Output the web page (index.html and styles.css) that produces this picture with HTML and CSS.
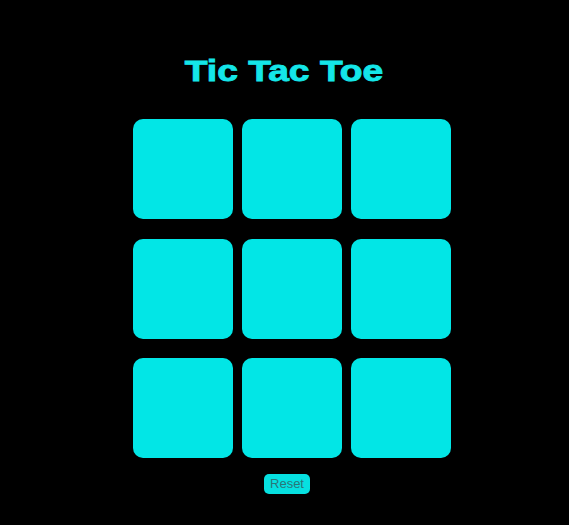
FILE: index.html
```html
<!DOCTYPE html>
<html>
<head>
<meta charset="utf-8">
<link rel="stylesheet" href="styles.css">
</head>
<body>
<div class="app">
  <h1 class="title"><span class="title-text">Tic Tac Toe</span></h1>
  <div class="board">
    <div class="cell"></div><div class="cell"></div><div class="cell"></div>
    <div class="cell"></div><div class="cell"></div><div class="cell"></div>
    <div class="cell"></div><div class="cell"></div><div class="cell"></div>
  </div>
  <button class="reset">Reset</button>
</div>
</body>
</html>
```
FILE: styles.css
```css
html, body {
  margin: 0;
  padding: 0;
  background: #000;
  height: 100%;
}
body {
  font-family: "Liberation Sans", Arial, sans-serif;
}
.app {
  display: flex;
  flex-direction: column;
  align-items: center;
  padding-top: 54px;
}
.title {
  margin: 0;
  font-size: 30px;
  line-height: 34px;
  font-weight: bold;
  color: #14e6e8;
  -webkit-text-stroke: 0.9px #14e6e8;
}
.title-text {
  display: inline-block;
  transform: scaleX(1.24);
}
.board {
  margin-top: 31px;
  margin-left: 15px;
  display: grid;
  grid-template-columns: repeat(3, 100px);
  grid-auto-rows: 100px;
  column-gap: 9px;
  row-gap: 19.5px;
}
.cell {
  background: #02e6e6;
  border-radius: 10px;
}
.reset {
  margin-top: 16px;
  margin-left: 5px;
  height: 20px;
  padding: 0 6px;
  border: none;
  border-radius: 5px;
  background: #06e0e0;
  color: #2a7679;
  font-family: "Liberation Sans", Arial, sans-serif;
  font-size: 13px;
  line-height: 20px;
}
```
